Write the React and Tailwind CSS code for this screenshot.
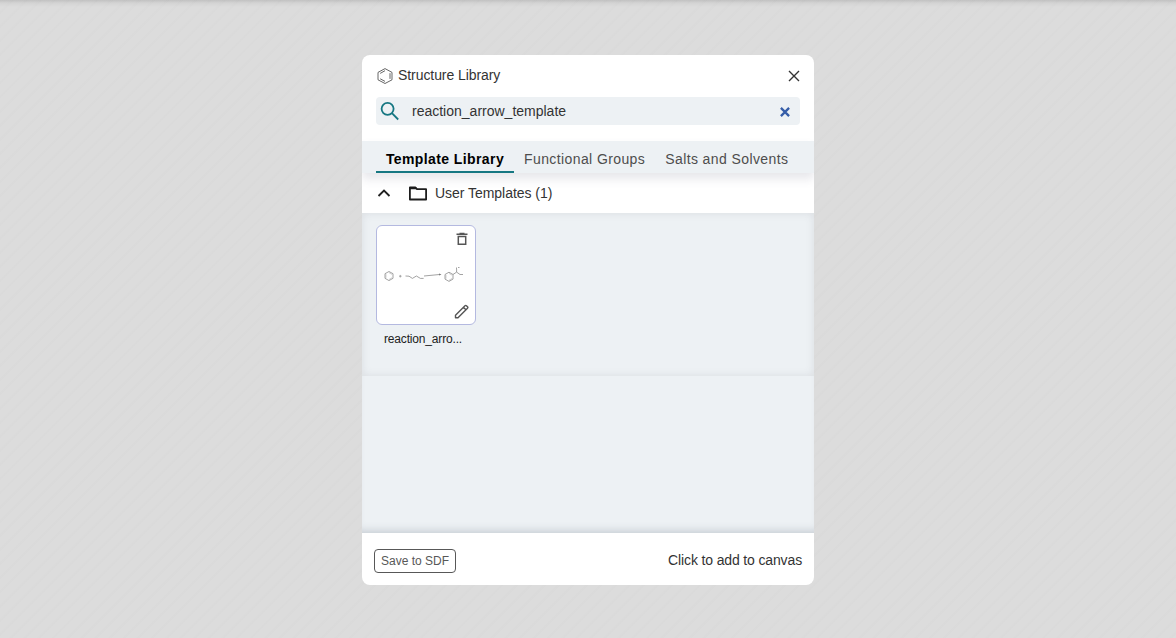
function Benzene() {
  return (
    <svg className="h-4 w-4" viewBox="0 0 16 16" fill="none" stroke="#555" strokeWidth="0.9">
      <path d="M8 .6 15 4.400V11.800L8 15.500 1 11.800V4.400Z" />
      <path d="M13 5.200v5.700M8 2.700 3.200 5.400M3.200 10.800 8 13.400" />
    </svg>
  );
}

function ReactionDrawing() {
  return (
    <svg className="h-[98px] w-[98px]" viewBox="0 0 98 98" fill="none" stroke="#8c8c8c" strokeWidth="0.8">
      <path d="M12 45.500 16 47.700v4.600l-4 2.300-4-2.300V47.700Z" />
      <path d="M9 48.200v3.600M12 46.700l3 1.700M12 53.500l3-1.800" strokeWidth="0.4" />
      <path d="M22 50.200h2.600M23.300 48.900v2.600" strokeWidth="0.7" />
      <path d="M28.500 50l3.500.200 3.400 2.200 4-2.400 4 2.400h3.200" />
      <path d="M47 50l15.500-1.500" />
      <path d="M62 47.400l2.500 1-2.400 1.200Z" fill="#777" stroke="none" />
      <path d="M72 46.200 76 48.500v4.600l-4 2.300-4-2.300v-4.600Z" />
      <path d="M69 49v3.600M72 47.400l3 1.700M72 54.300l3-1.800" strokeWidth="0.4" />
      <path d="M76 48.500l3.600-2.400V43M79.600 46.100l3.400 2.400h3M79.500 43v-1.500M81 41.500h1.500" />
    </svg>
  );
}

export default function App() {
  return (
    <div className="h-[638px] w-full overflow-hidden bg-[#dcdcdc] bg-[repeating-linear-gradient(135deg,transparent_0px,transparent_7px,rgba(0,0,0,0.008)_8px,rgba(0,0,0,0.008)_10px)] font-['Liberation_Sans',Arial,sans-serif] text-[#333]">
      <div className="h-[55px] bg-[linear-gradient(to_bottom,rgba(0,0,0,0.12)_0px,rgba(0,0,0,0.04)_3px,transparent_7px)]" />
      <div className="mx-auto flex h-[530px] w-[452px] flex-col overflow-hidden rounded-lg bg-white">
        <header className="flex h-[42px] shrink-0 items-center pl-[15px] pr-[14px]">
          <Benzene />
          <h1 className="ml-[5px] flex-1 pb-0.5 text-sm tracking-[-0.07px]">Structure Library</h1>
          <button aria-label="Close">
            <svg className="h-3 w-3" viewBox="0 0 12 12" fill="none" stroke="#333" strokeWidth="1.400"><path d="m1 1 10 10M11 1 1 11" /></svg>
          </button>
        </header>
        <div className="mx-[14px] flex h-7 shrink-0 items-center rounded bg-[#edf1f4] pl-1 pr-[10px]">
          <svg className="h-5 w-5" viewBox="0 0 20 20" fill="none" stroke="#167782" strokeWidth="1.800"><circle cx="7.600" cy="7.800" r="6" /><path d="m11.900 12.200 6.300 6.300" /></svg>
          <span className="ml-3 flex-1 text-sm">reaction_arrow_template</span>
          <svg className="mt-0.5 h-[10px] w-[10px]" viewBox="0 0 10 10" fill="none" stroke="#355da8" strokeWidth="2.300"><path d="m.9.900 8.200 8.200M9.100.900.900 9.100" /></svg>
        </div>
        <nav className="relative mt-4 flex h-8 shrink-0 bg-[#edf1f4] pl-[14px] text-sm text-[#4d4d4d] shadow-[0_6px_10px_0_rgba(103,104,132,0.16)]">
          <button className="flex h-8 w-[138px] items-center justify-center border-b-2 border-[#167782] pt-[5px] font-bold tracking-[0.4px] text-black">Template Library</button>
          <button className="ml-[10px] pt-1 tracking-[0.4px]">Functional Groups</button>
          <button className="ml-5 pt-1 tracking-[0.4px]">Salts and Solvents</button>
        </nav>
        <div className="flex h-10 shrink-0 items-center pl-[15px]">
          <svg className="h-[14px] w-[14px]" viewBox="0 0 14 14" fill="none" stroke="#222" strokeWidth="1.900"><path d="m1.500 10 5.500-5.500 5.500 5.500" /></svg>
          <svg className="ml-[18px] h-4 w-[18px]" viewBox="0 0 18 16" fill="none" stroke="#1d1d1d" strokeWidth="1.800" strokeLinejoin="round"><path d="M.9 14.500V2.400h5.400L8 4.200h9.100v10.300Z" /><path d="M.9 3.300h6.500" /></svg>
          <span className="ml-2 text-sm tracking-[-0.04px]">User Templates (1)</span>
        </div>
        <section className="h-[163px] shrink-0 bg-[#edf1f4] px-[14px] pt-3 shadow-[inset_0_0_8px_rgba(80,85,90,0.12)]">
          <article className="w-[100px]">
            <div className="relative h-[100px] rounded-md border border-[#b4b9e0] bg-white">
              <ReactionDrawing />
              <svg className="absolute right-[7px] top-[6px] h-[14px] w-[12px]" viewBox="0 0 12 14" fill="none" stroke="#555" strokeWidth="1.500"><path d="M.5 2.300h11M3.500 1.400h5M2.300 4.600h7.400v7.700H2.300Z" /></svg>
              <svg className="absolute bottom-[5px] right-[6px] h-[15px] w-[15px]" viewBox="0 0 15 15" fill="none" stroke="#555" strokeWidth="1.400" strokeLinejoin="round"><path d="M1.500 13.800V11.200L11 1.700q.7-.7 1.400 0L13.500 2.800q.7.700 0 1.400L4 13.800ZM9.400 3.300l2.500 2.500" /></svg>
            </div>
            <p className="ml-2 mt-[6px] text-xs tracking-[-0.17px] text-[#222]">reaction_arro...</p>
          </article>
        </section>
        <div className="min-h-0 flex-1 bg-[#edf1f4] shadow-[inset_0_-8px_8px_-6px_rgba(80,90,110,0.25)]" />
        <footer className="flex h-[52px] shrink-0 items-center justify-between px-3 pb-px pt-1">
          <button className="h-6 w-[82px] rounded border border-[#585858] text-xs text-[#585858]">Save to SDF</button>
          <span className="pb-0.5 text-sm tracking-[-0.14px]">Click to add to canvas</span>
        </footer>
      </div>
    </div>
  );
}
